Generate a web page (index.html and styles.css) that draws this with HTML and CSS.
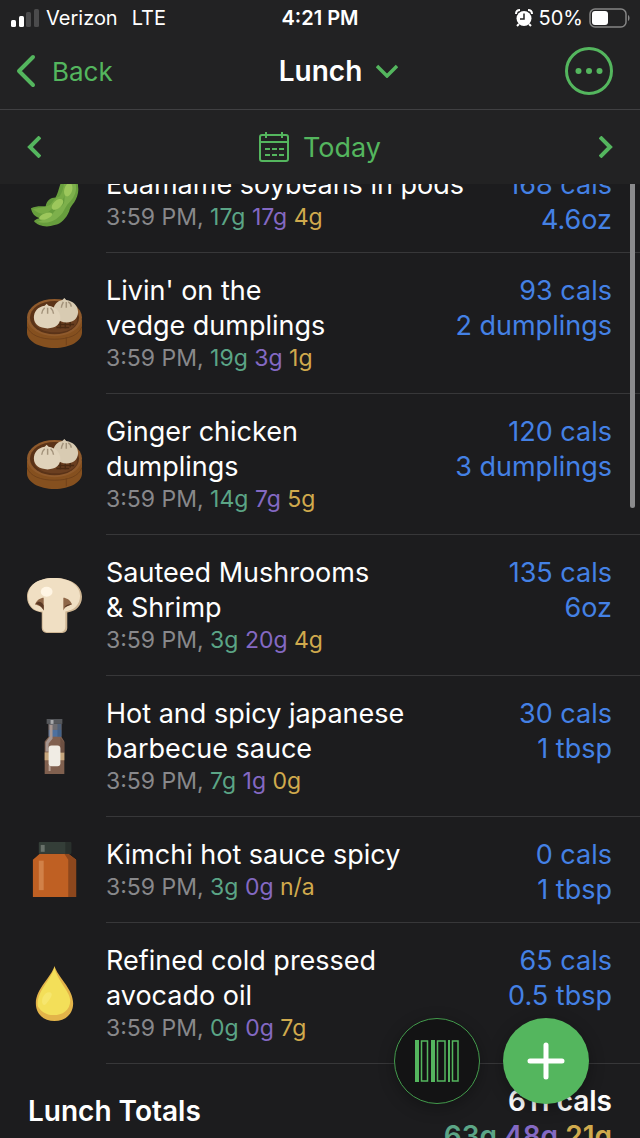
FILE: index.html
```html
<!doctype html>
<html lang="en">
<head>
    <meta charset="utf-8">
    <meta name="viewport" content="width=device-width, initial-scale=1">
    <title>Lunch</title>
    <link rel="stylesheet" href="styles.css">
</head>
<body>
    <svg class="defs" aria-hidden="true">
        <symbol id="dumplings" viewBox="0 0 56 56">
            <path d="M0 24v13c0 9 12 16 28 16s28-7 28-16V24z" fill="#85501f"/>
            <path d="M0 31c3 9 14 13 28 13s25-4 28-13M40 42v8" fill="none" stroke="#70411b" stroke-width="1"/>
            <ellipse cx="28" cy="22" rx="28" ry="19" fill="#8f5a2c"/>
            <ellipse cx="28" cy="22" rx="25" ry="17" fill="#5a3318"/>
            <ellipse cx="29" cy="25" rx="22" ry="12" fill="#6b3f20"/>
            <path d="M31 29h17M30 32h13M34 26v7M39 26v7M44 25v6" stroke="#4a2a12" stroke-width="1.5"/>
            <path d="M27 13c1-5 4-8 9-9l2-2 2 2c7 1 12 6 12 12 0 7-5 11-12 11s-13-5-13-14z" fill="#d8cbb2"/>
            <path d="M7 22c0-6 4-11 11-12l2-2 2 2c7 1 12 6 12 12 0 7-5 11-13 11S7 29 7 22z" fill="#e0d3bb"/>
            <path d="M18 12c-2 2-3 3-3 6M21 12v6M24 12c2 2 3 3 3 6M37 6c-1 2-2 4-2 6M40 6v6M42 6c2 1 3 3 3 5" fill="none" stroke="#a3937b" stroke-width="1.5"/>
        </symbol>
    </svg>

    <div class="app">
        <header class="header">
            <div class="status">
                <div class="status-left">
                    <svg width="30" height="18" viewBox="0 0 30 18" aria-hidden="true">
                        <rect x="1" y="11" width="5" height="7" rx="1.5" fill="#fff"/>
                        <rect x="9" y="7" width="5" height="11" rx="1.5" fill="#fff"/>
                        <rect x="16" y="3" width="5" height="15" rx="1.5" fill="#4b4b4c"/>
                        <rect x="24" y="0" width="5" height="18" rx="1.5" fill="#4b4b4c"/>
                    </svg>
                    <span>Verizon</span>
                    <span class="network">LTE</span>
                </div>
                <div class="clock">4:21 PM</div>
                <div class="status-right">
                    <svg width="18" height="18" viewBox="0 0 18 18" aria-hidden="true">
                        <circle cx="9" cy="9.500" r="7.500" fill="#fff"/>
                        <path d="M1 5Q1 1 5 1M17 5Q17 1 13 1M4 15l-2 2M14 15l2 2" fill="none" stroke="#fff" stroke-width="2"/>
                        <path d="M9 4.500v5.500H5" fill="none" stroke="#222" stroke-width="1.500"/>
                    </svg>
                    <span>50%</span>
                    <svg width="41" height="20" viewBox="0 0 41 20" aria-hidden="true">
                        <rect x="1" y="1" width="36" height="18" rx="5" fill="none" stroke="#858585" stroke-width="1.500"/>
                        <rect x="3" y="3" width="16" height="14" rx="3" fill="#fff"/>
                        <path d="M39 7c2 1 2 5 0 6z" fill="#858585"/>
                    </svg>
                </div>
            </div>
            <nav class="nav">
                <a class="back" href="#">
                    <svg width="20" height="34" viewBox="0 0 20 34" aria-hidden="true"><path d="M17 3L3 17l14 14" fill="none" stroke="currentColor" stroke-width="4" stroke-linecap="round" stroke-linejoin="round"/></svg>
                    Back
                </a>
                <button class="meal" type="button">
                    Lunch
                    <svg width="22" height="14" viewBox="0 0 22 14" aria-hidden="true"><path d="M1 2l10 10L21 2" fill="none" stroke="#54b65e" stroke-width="3.500"/></svg>
                </button>
                <button class="more" type="button" aria-label="More">
                    <svg width="48" height="48" viewBox="0 0 48 48" aria-hidden="true">
                        <circle cx="24" cy="24" r="22.500" fill="none" stroke="currentColor" stroke-width="3"/>
                        <g fill="currentColor"><circle cx="13.500" cy="24" r="3"/><circle cx="24" cy="24" r="3"/><circle cx="34.500" cy="24" r="3"/></g>
                    </svg>
                </button>
            </nav>
            <div class="date-bar">
                <button type="button" aria-label="Previous day">
                    <svg width="14" height="22" viewBox="0 0 14 22" aria-hidden="true"><path d="M13 1L3 11l10 10" fill="none" stroke="currentColor" stroke-width="4"/></svg>
                </button>
                <button class="today" type="button">
                    <svg width="30" height="30" viewBox="0 0 30 30" aria-hidden="true">
                        <g fill="none" stroke="currentColor" stroke-width="2">
                            <rect x="1" y="3" width="28" height="26" rx="2"/>
                            <path d="M1 10h28M7 0v6M23 0v6"/>
                            <path d="M6 17h5M13 17h5M20 17h5M6 23h5M13 23h5M20 23h5"/>
                        </g>
                    </svg>
                    Today
                </button>
                <button type="button" aria-label="Next day">
                    <svg width="14" height="22" viewBox="0 0 14 22" aria-hidden="true"><path d="M1 1l10 10L1 21" fill="none" stroke="currentColor" stroke-width="4"/></svg>
                </button>
            </div>
        </header>

        <div class="list-wrap">
            <main class="list" id="list">
                <ul class="foods">
                    <li class="food">
                        <svg class="icon" viewBox="0 0 56 56" aria-hidden="true">
                            <path d="M41 0c7 3 11 8 11 15 1 6-1 11-4 16-3 4-4 5-5 9-3 7-8 13-15 14-8 3-17 1-21-4 2-2 4-3 6-3-5-1-8-5-9-10 6-3 11-2 15-2 1-6 5-9 10-9 4-6 4-18 12-26z" fill="#679d3d"/>
                            <path d="M41 2c5 4 9 8 9 14s-3 11-7 15c-5 5-5 10-10 14-6 6-14 8-23 6 7-2 14-5 18-11 4-5 9-4 10-10 1-10 0-19 3-28z" fill="#7db04c"/>
                            <path d="M6 38c6-2 13-2 18-5 3-4 5-7 9-8 4-5 4-12 6-18 3 8 1 15-2 20-3 5-8 7-12 11-5 5-10 7-19 0z" fill="#77ab45"/>
                            <ellipse cx="31" cy="33" rx="7" ry="4" transform="rotate(-42 31 33)" fill="#9cc75c"/>
                            <ellipse cx="42" cy="18" rx="4" ry="7" transform="rotate(15 42 18)" fill="#9cc75c"/>
                            <ellipse cx="19" cy="45" rx="7" ry="3" transform="rotate(-20 19 45)" fill="#9cc75c"/>
                        </svg>
                        <div class="info">
                            <div class="name">Edamame soybeans in pods</div>
                            <div class="meta">3:59 PM, <span class="carbs">17g</span> <span class="protein">17g</span> <span class="fat">4g</span></div>
                        </div>
                        <div class="amount">168 cals<br>4.6oz</div>
                    </li>
                    <li class="food">
                        <svg class="icon" aria-hidden="true"><use href="#dumplings"/></svg>
                        <div class="info">
                            <div class="name">Livin' on the<br>vedge dumplings</div>
                            <div class="meta">3:59 PM, <span class="carbs">19g</span> <span class="protein">3g</span> <span class="fat">1g</span></div>
                        </div>
                        <div class="amount">93 cals<br>2 dumplings</div>
                    </li>
                    <li class="food">
                        <svg class="icon" aria-hidden="true"><use href="#dumplings"/></svg>
                        <div class="info">
                            <div class="name">Ginger chicken<br>dumplings</div>
                            <div class="meta">3:59 PM, <span class="carbs">14g</span> <span class="protein">7g</span> <span class="fat">5g</span></div>
                        </div>
                        <div class="amount">120 cals<br>3 dumplings</div>
                    </li>
                    <li class="food">
                        <svg class="icon" viewBox="0 0 56 56" aria-hidden="true">
                            <path d="M28 0C45 0 56 8 56 19c0 9-6 15-15 16v16c0 3-2 5-5 5H20c-3 0-5-2-5-5V35C6 34 0 28 0 19 0 8 11 0 28 0z" fill="#cfb694"/>
                            <path d="M27 0c17 0 27 8 27 18 0 9-6 15-15 16v16c0 3-2 5-4 5H20c-2 0-4-2-4-5V34C7 34 1 28 1 19 1 8 10 0 27 0z" fill="#f0dfc3"/>
                            <path d="M8 27c2-5 6-7 9-7v13c-2-4-5-5-9-6zM46 27c-2-5-6-7-9-7v13c2-4 5-5 9-6z" fill="#8e6647"/>
                            <path d="M9 26c3-3 6-2 8 2v5c-2-4-4-5-8-7M38 30c2-3 5-4 7-3" fill="#5a3823"/>
                            <ellipse cx="20" cy="14" rx="6" ry="5" fill="#fff5e4"/>
                        </svg>
                        <div class="info">
                            <div class="name">Sauteed Mushrooms<br>&amp; Shrimp</div>
                            <div class="meta">3:59 PM, <span class="carbs">3g</span> <span class="protein">20g</span> <span class="fat">4g</span></div>
                        </div>
                        <div class="amount">135 cals<br>6oz</div>
                    </li>
                    <li class="food">
                        <svg class="icon" viewBox="0 0 56 56" aria-hidden="true">
                            <path d="M22 5h13v13l3 5v33H18V23l4-5z" fill="#80604f"/>
                            <path d="M22 5h13v6H22z" fill="#6d6c70"/>
                            <path d="M22 11h13v7H22z" fill="#4d719f"/>
                            <path d="M31 5h4v13h-4z" fill="#3e597c" opacity="0.6"/>
                            <path d="M18 34h20v8H18z" fill="#c6a67d"/>
                            <path d="M23 6h3v14l-4 5v8h-3v-9l4-6z" fill="#a79690"/>
                            <path d="M34 19l4 5v10h-4z" fill="#6d5042"/>
                            <path d="M22 47h2v6h-2z" fill="#b7a095"/>
                            <rect x="22" y="27" width="12" height="21" rx="3" fill="#f0ece4"/>
                            <path d="M20 0h16v5H20z" fill="#55575b"/>
                            <path d="M24 1h3v4h-3z" fill="#a8a9ab"/>
                        </svg>
                        <div class="info">
                            <div class="name">Hot and spicy japanese<br>barbecue sauce</div>
                            <div class="meta">3:59 PM, <span class="carbs">7g</span> <span class="protein">1g</span> <span class="fat">0g</span></div>
                        </div>
                        <div class="amount">30 cals<br>1 tbsp</div>
                    </li>
                    <li class="food">
                        <svg class="icon" viewBox="0 0 56 56" aria-hidden="true">
                            <path d="M13 12h29l8 6v38H6V18z" fill="#bf6023"/>
                            <path d="M38 12h4l8 6v38h-8V18z" fill="#8d471d"/>
                            <path d="M12 19h5v30h-5z" fill="#d18148"/>
                            <rect x="12" y="0" width="33" height="12" rx="1" fill="#343e38"/>
                            <path d="M14 3h4v7h-4z" fill="#69716a"/>
                            <path d="M39 0h6v12h-6z" fill="#29302c"/>
                        </svg>
                        <div class="info">
                            <div class="name">Kimchi hot sauce spicy</div>
                            <div class="meta">3:59 PM, <span class="carbs">3g</span> <span class="protein">0g</span> <span class="fat">n/a</span></div>
                        </div>
                        <div class="amount">0 cals<br>1 tbsp</div>
                    </li>
                    <li class="food">
                        <svg class="icon" viewBox="0 0 56 56" aria-hidden="true">
                            <path d="M28 0c3 11 19 23 19 38 0 11-8 18-19 18S9 49 9 38C9 23 25 11 28 0z" fill="#e3b449"/>
                            <path d="M28 1c2 13 16 25 16 34 0 10-8 15-17 15-8 0-13-4-16-9-2-15 14-27 17-40z" fill="#f3df59"/>
                            <path d="M16 32c2-4 5-6 8-5 3 2 0 6-4 11-3 4-6 0-4-6z" fill="#f6e66e"/>
                        </svg>
                        <div class="info">
                            <div class="name">Refined cold pressed<br>avocado oil</div>
                            <div class="meta">3:59 PM, <span class="carbs">0g</span> <span class="protein">0g</span> <span class="fat">7g</span></div>
                        </div>
                        <div class="amount">65 cals<br>0.5 tbsp</div>
                    </li>
                </ul>
                <div class="totals">
                    <h2>Lunch Totals</h2>
                    <div class="totals-amount">611 cals<br><span class="carbs">63g</span> <span class="protein">48g</span> <span class="fat">21g</span></div>
                </div>
            </main>
            <div class="thumb"></div>
        </div>

        <div class="actions">
            <button class="scan" type="button" aria-label="Scan barcode">
                <svg width="44" height="42" viewBox="0 0 44 42" aria-hidden="true">
                    <g fill="currentColor"><path d="M0 0h4v42H0zM16 0h4v42h-4zM33 0h2v42h-2z"/></g>
                    <g fill="none" stroke="currentColor" stroke-width="1.500"><path d="M6.500 1h6v40h-6zM22.500 1h7.500v40h-7.500zM37.500 1h5.500v40h-5.500z"/></g>
                </svg>
            </button>
            <button class="add" type="button" aria-label="Add food">
                <svg width="38" height="38" viewBox="0 0 38 38" aria-hidden="true"><path d="M19 3v32M3 19h32" stroke="currentColor" stroke-width="5" stroke-linecap="round"/></svg>
            </button>
        </div>
    </div>
    <script>
        document.getElementById("list").scrollTop = 37;
    </script>
</body>
</html>
```
FILE: styles.css
```css
* {
    box-sizing: border-box;
}
body {
    margin: 0;
    background-color: #1c1c1e;
    color: #fff;
    font-family: Inter, "Liberation Sans", sans-serif;
    font-size: 27px;
}
svg {
    display: block;
    flex: none;
}
button {
    padding: 0;
    border: none;
    background: none;
    color: #54b65e;
    font: inherit;
    cursor: pointer;
}
.defs {
    display: none;
}
.app {
    display: flex;
    flex-direction: column;
    height: 100vh;
}
.header {
    background-color: #222223;
}
.status {
    display: grid;
    grid-template-columns: 1fr auto 1fr;
    align-items: center;
    height: 35px;
    padding: 0 10px;
    font-size: 20px;
}
.status-left, .status-right {
    display: flex;
    align-items: center;
    gap: 6px;
}
.status-right {
    justify-content: flex-end;
}
.network {
    margin-left: 8px;
}
.clock {
    font-weight: 600;
}
.nav {
    display: grid;
    grid-template-columns: 1fr auto 1fr;
    align-items: center;
    height: 75px;
    padding: 0 27px 2px 16px;
    border-bottom: 1px solid #404042;
}
.back {
    display: flex;
    align-items: center;
    gap: 16px;
    color: #54b65e;
    font-size: 26px;
    text-decoration: none;
}
.meal {
    display: flex;
    align-items: center;
    gap: 14px;
    padding-left: 48px;
    color: #fff;
    font-size: 28px;
    font-weight: 600;
}
.more {
    justify-self: end;
}
.date-bar {
    display: flex;
    align-items: center;
    justify-content: space-between;
    height: 74px;
    padding: 0 27px;
}
.today {
    display: flex;
    align-items: center;
    gap: 14px;
}
.list-wrap {
    position: relative;
    flex: 1;
    min-height: 0;
}
.list {
    height: 100%;
    overflow-y: auto;
    scrollbar-width: none;
}
.thumb {
    position: absolute;
    top: 0;
    right: 5px;
    width: 5px;
    height: 34%;
    border-radius: 0 0 3px 3px;
    background-color: #8b8b8d;
}
.foods {
    margin: 0;
    padding: 0;
    list-style: none;
}
.food {
    display: grid;
    grid-template-columns: 79px 1fr auto;
    padding: 20px 28px 16px 27px;
    line-height: 35px;
    /* separator starts at the text, not at the icon */
    background: linear-gradient(#373739, #373739) 106px 100% / 100% 1px no-repeat;
}
.icon {
    width: 55px;
    height: 55px;
    margin-bottom: 5px;
    align-self: center;
}
.meta {
    margin-bottom: 5px;
    color: #88888b;
    font-size: 23px;
    line-height: 30px;
}
.amount {
    color: #4481e5;
    text-align: right;
}
.carbs {
    color: #5ba586;
}
.protein {
    color: #8469c3;
}
.fat {
    color: #d0aa4d;
}
.totals {
    display: flex;
    justify-content: space-between;
    padding: 20px 28px 120px;
    font-size: 28px;
    font-weight: 600;
    line-height: 35px;
}
.totals h2 {
    margin: 10px 0 0;
    font-size: 28px;
    font-weight: 600;
}
.totals-amount {
    text-align: right;
}
.actions {
    position: fixed;
    right: 51px;
    bottom: 34px;
    display: flex;
    gap: 23px;
}
.scan, .add {
    display: flex;
    align-items: center;
    justify-content: center;
    width: 86px;
    height: 86px;
    border-radius: 50%;
    box-shadow: 0 4px 16px rgba(0, 0, 0, 0.3);
}
.scan {
    border: 1px solid #439b4c;
    background-color: #131314;
}
.add {
    background-color: #54b65e;
    color: #fff;
}
```
